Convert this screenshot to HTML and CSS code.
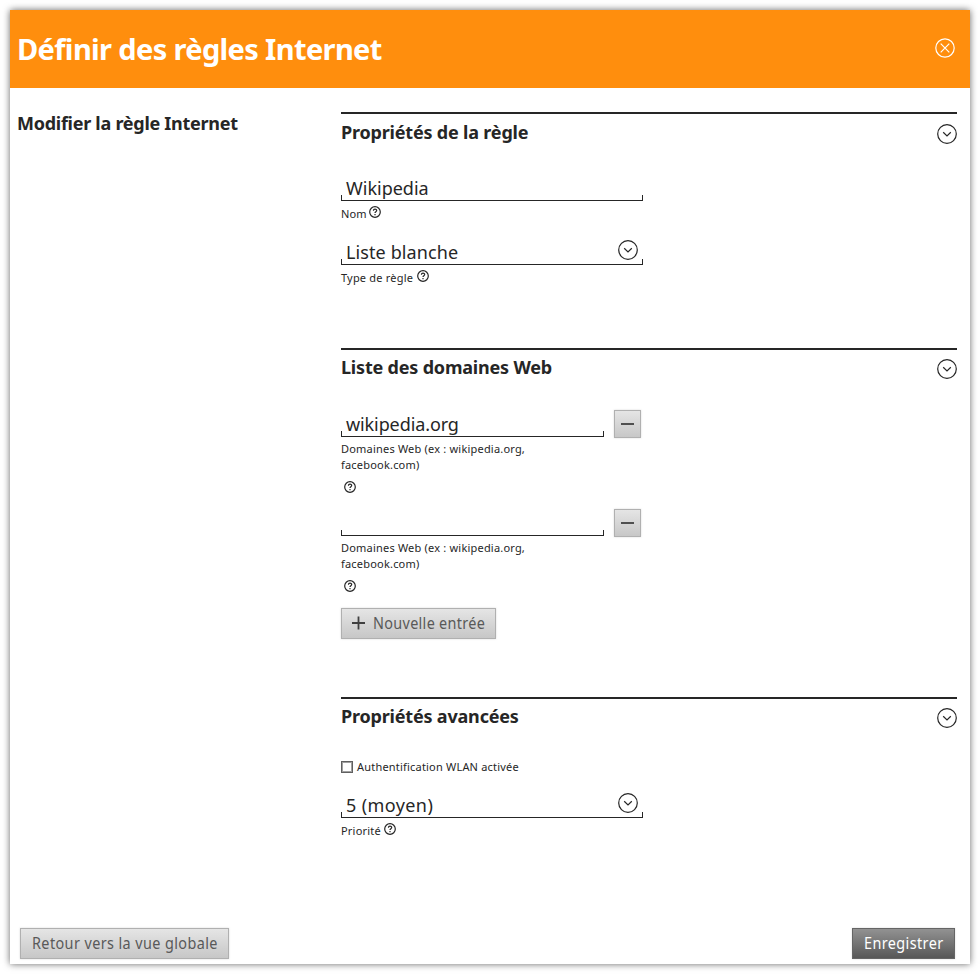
FILE: index.html
```html
<!DOCTYPE html>
<html lang="fr">
<head>
<meta charset="utf-8">
<title>Définir des règles Internet</title>
<link rel="stylesheet" href="styles.css">
</head>
<body>
<svg width="0" height="0" class="defs">
  <symbol id="chevron" viewBox="0 0 20 20"><circle cx="10" cy="10" r="9.3"/><path d="M6.200 8.300 10 12l3.800-3.700"/></symbol>
  <symbol id="close" viewBox="0 0 20 20"><circle cx="10" cy="10" r="9.2"/><path d="m5.700 5.700 8.600 8.600m0-8.600-8.600 8.600"/></symbol>
  <symbol id="help" viewBox="0 0 12 12"><circle cx="6" cy="6" r="5.3"/><path d="M4.400 4.800c0-2.200 3.300-2.100 3.300-.2C7.700 5.800 6 5.700 6 7.100M6 8v1.200"/></symbol>
</svg>
<div class="dialog">
  <header class="top">
    <h1>Définir des règles Internet</h1>
    <svg class="icon close"><use href="#close"/></svg>
  </header>
  <main class="content">
    <h2 class="side">Modifier la règle Internet</h2>
    <div class="form">
      <section class="rule">
        <div class="head"><h2>Propriétés de la règle</h2><svg class="icon"><use href="#chevron"/></svg></div>
        <div class="field"><span class="value">Wikipedia</span></div>
        <div class="label name"><span>Nom</span><svg class="help"><use href="#help"/></svg></div>
        <div class="field"><span class="value choice">Liste blanche</span><svg class="icon"><use href="#chevron"/></svg></div>
        <div class="label type"><span>Type de règle</span><svg class="help"><use href="#help"/></svg></div>
      </section>
      <section class="domains">
        <div class="head"><h2>Liste des domaines Web</h2><svg class="icon"><use href="#chevron"/></svg></div>
        <div class="entry">
          <div class="row"><div class="field"><span class="value domain">wikipedia.org</span></div><button class="btn minus"><svg><path d="M1 7h13"/></svg></button></div>
          <div class="hint">Domaines Web (ex : wikipedia.org,<br>facebook.com)</div>
          <svg class="help"><use href="#help"/></svg>
        </div>
        <div class="entry">
          <div class="row"><div class="field"></div><button class="btn minus"><svg><path d="M1 7h13"/></svg></button></div>
          <div class="hint">Domaines Web (ex : wikipedia.org,<br>facebook.com)</div>
          <svg class="help"><use href="#help"/></svg>
        </div>
        <button class="btn add"><svg><path d="M1 7h13M7.500 .5v13"/></svg><span>Nouvelle entrée</span></button>
      </section>
      <section class="advanced">
        <div class="head"><h2>Propriétés avancées</h2><svg class="icon"><use href="#chevron"/></svg></div>
        <label class="check"><input type="checkbox"><span>Authentification WLAN activée</span></label>
        <div class="field"><span class="value priority">5 (moyen)</span><svg class="icon"><use href="#chevron"/></svg></div>
        <div class="label"><span>Priorité</span><svg class="help"><use href="#help"/></svg></div>
      </section>
    </div>
  </main>
  <footer class="actions">
    <button class="btn back"><span>Retour vers la vue globale</span></button>
    <button class="btn save"><span>Enregistrer</span></button>
  </footer>
</div>
</body>
</html>
```
FILE: styles.css
```css
* { box-sizing: border-box; }
body { margin: 0; padding: 10px; height: 974px; background: #fff; color: #262626; font-family: "Noto Sans", sans-serif; overflow: hidden; }
.defs { position: absolute; }
svg { fill: none; stroke: #262626; stroke-width: 1.2; flex: none; display: block; }
h1, h2 { margin: 0; white-space: nowrap; }
.dialog { height: 954px; display: flex; flex-direction: column; background: #fff; box-shadow: 0 0 7px rgba(0,0,0,.6); }
.top { height: 78px; flex: none; background: #ff8e0d; color: #fff; display: flex; justify-content: space-between; padding: 0 15px 0 7px; }
h1 { font-size: 29px; line-height: 78px; font-weight: 700; letter-spacing: -.64px; }
.icon { width: 20px; height: 20px; }
.close { margin-top: 28px; stroke: #fff; }
.content { display: flex; flex: 1; padding: 24px 13px 0 7px; }
h2 { font-size: 18px; line-height: 24px; font-weight: 700; letter-spacing: -.19px; }
.side { width: 324px; flex: none; margin-top: -1px; letter-spacing: -.27px; }
.form { flex: 1; }
.rule { height: 236px; }
.domains { height: 349px; }
.head { height: 62px; border-top: 2px solid #262626; display: flex; justify-content: space-between; padding-top: 5px; }
.head .icon { margin-top: 4px; }
.rule .head { padding-top: 6px; }
.field { width: 302px; height: 27px; display: flex; justify-content: space-between; padding: 0 5px; border-bottom: 1px solid #262626;
  background: linear-gradient(#262626, #262626) left bottom / 1px 5px no-repeat, linear-gradient(#262626, #262626) right bottom / 1px 5px no-repeat; }
.field .icon { margin-top: 2px; }
.value { font-size: 18px; line-height: 28px; white-space: nowrap; }
.choice { letter-spacing: .1px; }
.domain { letter-spacing: -.1px; }
.priority { letter-spacing: .4px; }
.label { height: 37px; display: flex; gap: 3px; padding-top: 5px; font-size: 11px; line-height: 15px; letter-spacing: .2px; white-space: nowrap; }
.name { gap: 2px; letter-spacing: .1px; }
.type { gap: 4px; }
.help { width: 12px; height: 12px; stroke-width: 1.2; }
.row { display: flex; gap: 10px; }
.row .field { width: 263px; }
.entry { height: 99px; }
.hint { margin-top: 3px; font-size: 11px; line-height: 16px; letter-spacing: .2px; }
.entry > .help { margin: 8px 0 0 3px; }
.btn { font-family: "Noto Sans", sans-serif; font-size: 16px; color: #595959; border: 1px solid #b0b0b0; padding: 0 0 2px; background: linear-gradient(#e5e5e5, #c7c7c7); box-shadow: 0 0 2px rgba(0,0,0,.15); display: flex; align-items: center; }
.btn svg { width: 15px; height: 14px; stroke: #404040; stroke-width: 1.8; }
.btn span { display: inline-block; transform-origin: left; transform: scaleX(.9); white-space: nowrap; letter-spacing: .35px; }
.minus { width: 27px; height: 28px; justify-content: center; padding: 0; }
.add { width: 155px; height: 31px; padding-left: 9px; gap: 7px; }
.check { display: flex; align-items: center; gap: 4px; height: 15px; font-size: 11px; letter-spacing: .2px; margin-bottom: 17px; }
.check input { appearance: none; width: 12px; height: 12px; margin: 0; border: 1px solid #606060; box-shadow: inset 0 0 0 1px #a0a0a0; }
.actions { height: 36px; display: flex; justify-content: space-between; padding: 0 15px 0 10px; }
.back { width: 209px; height: 31px; padding-left: 11px; }
.back span { letter-spacing: .45px; }
.save { width: 103px; height: 31px; padding-left: 11px; color: #fff; border-color: #656565; background: linear-gradient(#929292, #575757); }
.save span { letter-spacing: .45px; }
```
